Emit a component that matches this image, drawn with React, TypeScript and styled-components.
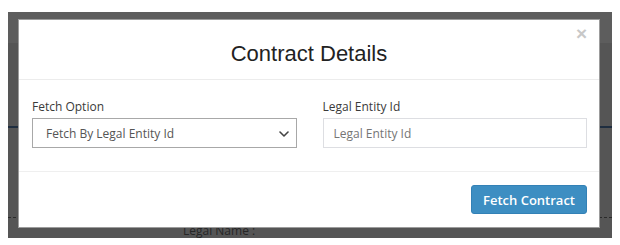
import styled, { createGlobalStyle } from 'styled-components';

const GlobalStyle = createGlobalStyle`
  html, body {
    margin: 0;
    background: #ffffff;
    font-family: 'Open Sans', 'Liberation Sans', sans-serif;
  }
  * {
    box-sizing: border-box;
  }
`;

const App = () => {
  return (
    <>
      <GlobalStyle />
      <Page>
        <Backdrop>
          {/* page behind the modal, dimmed */}
          <NavBand />
          <NavyRule />
          <DashedRule />
          <LegalName>Legal Name :</LegalName>

          <Modal>
            <Header>
              <Title>Contract Details</Title>
              <Close aria-label="close">×</Close>
            </Header>
            <Body>
              <Field>
                <Label>Fetch Option</Label>
                <SelectWrap>
                  <Select defaultValue="legal">
                    <option value="legal">Fetch By Legal Entity Id</option>
                    <option value="contract">Fetch By Contract Id</option>
                  </Select>
                  <Chevron width="10" height="6" viewBox="0 0 10 6">
                    <path d="M1 1l4 4 4-4" fill="none" stroke="#444" strokeWidth="1.6" strokeLinecap="round" strokeLinejoin="round" />
                  </Chevron>
                </SelectWrap>
              </Field>
              <Field>
                <Label>Legal Entity Id</Label>
                <Input type="text" placeholder="Legal Entity Id" />
              </Field>
            </Body>
            <Footer>
              <Button>Fetch Contract</Button>
            </Footer>
          </Modal>
        </Backdrop>
      </Page>
    </>
  );
};

export default App;

const Page = styled.div`
  padding: 12px 8px 7px;
`;

const Backdrop = styled.div`
  position: relative;
  height: 226px;
  background: #555555;
  overflow: hidden;
  display: flex;
  flex-direction: column;
`;

const NavBand = styled.div`
  height: 32px;
  background: #5d5d5d;
`;

const NavyRule = styled.div`
  margin-top: 83px;
  height: 2px;
  background: #1f2e40;
`;

const DashedRule = styled.div`
  margin-top: 89px;
  border-top: 1px dashed #2a2a2a;
`;

const LegalName = styled.div`
  margin-top: 6px;
  padding-left: 175px;
  font-size: 12px;
  line-height: 14px;
  color: #262626;
`;

const Modal = styled.div`
  position: absolute;
  top: 7px;
  left: 10px;
  width: 582px;
  height: 209px;
  background: #ffffff;
  border: 1px solid #9c9c9c;
  display: flex;
  flex-direction: column;
`;

const Header = styled.div`
  position: relative;
  height: 60px;
  border-bottom: 1px solid #ececec;
  display: flex;
  align-items: center;
  justify-content: center;
`;

const Title = styled.h4`
  margin: 0;
  font-family: 'Liberation Sans', Arial, sans-serif;
  font-weight: 400;
  font-size: 22px;
  color: #222222;
  padding-top: 8px;
`;

const Close = styled.button`
  position: absolute;
  top: 4px;
  right: 12px;
  padding: 0;
  border: 0;
  background: none;
  font-family: 'Liberation Sans', Arial, sans-serif;
  font-weight: 700;
  font-size: 19px;
  line-height: 19px;
  color: #c8c8c8;
  cursor: pointer;
`;

const Body = styled.div`
  display: grid;
  grid-template-columns: 1fr 1fr;
  column-gap: 26px;
  padding: 18px 12px 23px 13px;
  border-bottom: 1px solid #efefef;
`;

const Field = styled.div`
  display: flex;
  flex-direction: column;
`;

const Label = styled.label`
  font-size: 12px;
  line-height: 18px;
  color: #3a3a3a;
  margin-bottom: 2px;
`;

const SelectWrap = styled.div`
  position: relative;
`;

const Select = styled.select`
  appearance: none;
  width: 100%;
  height: 30px;
  padding: 0 28px 0 13px;
  border: 1px solid #a8a8a8;
  border-radius: 0;
  background: #ffffff;
  font-family: inherit;
  font-size: 12px;
  color: #555555;
  outline: none;
`;

const Chevron = styled.svg`
  position: absolute;
  right: 8px;
  top: 13px;
  pointer-events: none;
`;

const Input = styled.input`
  width: 100%;
  height: 30px;
  padding: 0 10px;
  border: 1px solid #dddee2;
  font-family: inherit;
  font-size: 12px;
  color: #555555;
  outline: none;

  ::placeholder {
    color: #9c9c9c;
  }
`;

const Footer = styled.div`
  flex: 1;
  display: flex;
  justify-content: flex-end;
  align-items: flex-start;
  padding: 13px 12px 0;
`;

const Button = styled.button`
  height: 29px;
  padding: 0 11px;
  border: 1px solid #3381b6;
  border-radius: 3px;
  background: #3d8ec2;
  color: #ffffff;
  font-family: inherit;
  font-weight: 600;
  font-size: 13px;
  cursor: pointer;
`;
